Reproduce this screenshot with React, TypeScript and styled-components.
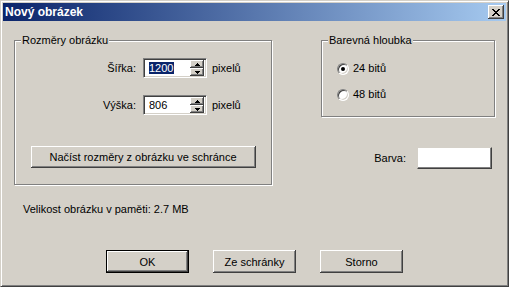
import styled, { createGlobalStyle, css } from 'styled-components';

const GlobalStyle = createGlobalStyle`
  html, body {
    margin: 0;
    padding: 0;
    background: #d4d0c8;
  }
  body {
    font-family: 'Liberation Sans', Arial, sans-serif;
    font-size: 11px;
    color: #000;
  }
`;

const raised = css`
  background: #d4d0c8;
  box-shadow: inset -1px -1px #404040, inset 1px 1px #fff, inset -2px -2px #808080,
    inset 2px 2px #d4d0c8;
`;

const Window = styled.div`
  box-sizing: border-box;
  width: 509px;
  height: 287px;
  display: flex;
  flex-direction: column;
  padding: 2px;
  background: #d4d0c8;
  border: 1px solid;
  border-color: #d4d0c8 #404040 #404040 #d4d0c8;
  box-shadow: inset 1px 1px #fff, inset -1px -1px #808080;
`;

const TitleBar = styled.div`
  height: 18px;
  display: flex;
  align-items: center;
  justify-content: space-between;
  padding: 0 2px;
  background: linear-gradient(to right, #0a246a, #a6caf0);
`;

const Title = styled.span`
  color: #fff;
  font-weight: bold;
  font-size: 12px;
  line-height: 14px;
`;

const CloseButton = styled.div`
  ${raised};
  width: 16px;
  height: 14px;
  display: flex;
  align-items: center;
  justify-content: center;
`;

const Client = styled.div`
  display: grid;
  grid-template-columns: 258px 174px;
  justify-content: space-between;
  padding: 19px 11px 0 11px;
`;

const Column = styled.div`
  display: flex;
  flex-direction: column;
`;

const GroupBox = styled.div<{ $height: number }>`
  box-sizing: border-box;
  height: ${({ $height }) => $height}px;
  display: flex;
  flex-direction: column;
  border: 1px solid #808080;
  box-shadow: inset 1px 1px #fff, 1px 1px #fff;
`;

const Caption = styled.div`
  align-self: flex-start;
  margin: -7px 0 0 6px;
  padding: 0 1px;
  line-height: 13px;
  background: #d4d0c8;
`;

const FieldRow = styled.div<{ $top: number }>`
  display: flex;
  align-items: center;
  margin-top: ${({ $top }) => $top}px;
  padding-left: 61px;
`;

const FieldLabel = styled.span`
  width: 60px;
  margin-right: 7px;
  text-align: right;
`;

const SpinBox = styled.div`
  box-sizing: border-box;
  width: 64px;
  height: 20px;
  display: flex;
  align-items: center;
  padding: 2px 2px 2px 5px;
  background: #fff;
  border: 1px solid;
  border-color: #808080 #fff #fff #808080;
  box-shadow: inset 1px 1px #404040, inset -1px -1px #d4d0c8;
`;

const SpinValue = styled.span<{ $selected?: boolean }>`
  flex: 1;
  line-height: 13px;
  span {
    padding: 0 1px 0 0;
    ${({ $selected }) =>
      $selected &&
      css`
        background: #0a246a;
        color: #fff;
      `}
  }
`;

const Spinner = styled.div`
  display: flex;
  flex-direction: column;
`;

const SpinButton = styled.div`
  ${raised};
  width: 14px;
  height: 8px;
  display: flex;
  align-items: center;
  justify-content: center;
`;

const Unit = styled.span`
  margin-left: 5px;
`;

const PushButton = styled.div<{ $default?: boolean; $width: number }>`
  ${raised};
  box-sizing: border-box;
  width: ${({ $width }) => $width}px;
  height: 23px;
  display: flex;
  align-items: center;
  justify-content: center;
  ${({ $default }) =>
    $default &&
    css`
      border: 1px solid #000;
    `}
`;

const WideButton = styled(PushButton)`
  height: 22px;
  align-self: center;
  margin-top: 31px;
`;

const InfoText = styled.div`
  margin: 18px 0 0 9px;
  line-height: 13px;
`;

const RadioRow = styled.label<{ $top: number }>`
  display: flex;
  align-items: center;
  margin: ${({ $top }) => $top}px 0 0 15px;
  line-height: 13px;
`;

const RadioDot = styled.span<{ $checked?: boolean }>`
  position: relative;
  box-sizing: border-box;
  width: 12px;
  height: 12px;
  margin-right: 4px;
  border-radius: 50%;
  background: #fff;
  border: 1px solid;
  border-color: #808080 #fff #fff #808080;
  box-shadow: inset 1px 1px #404040, inset -1px -1px #d4d0c8;
  &::after {
    content: '';
    display: ${({ $checked }) => ($checked ? 'block' : 'none')};
    position: absolute;
    left: 3px;
    top: 3px;
    width: 4px;
    height: 4px;
    border-radius: 50%;
    background: #000;
  }
`;

const ColorRow = styled.div`
  display: flex;
  align-items: center;
  justify-content: flex-end;
  margin-top: 30px;
  padding-right: 3px;
`;

const ColorLabel = styled.span`
  margin-right: 11px;
`;

const ColorSwatch = styled.div`
  box-sizing: border-box;
  width: 75px;
  height: 22px;
  background: #fff;
  border: 1px solid;
  border-color: #d4d0c8 #404040 #404040 #d4d0c8;
  box-shadow: inset -1px -1px #808080;
`;

const ButtonRow = styled.div`
  display: flex;
  justify-content: center;
  gap: 24px;
  margin-top: auto;
  padding-bottom: 11px;
`;

const Arrow = ({ up }: { up?: boolean }) => (
  <svg width="5" height="3" viewBox="0 0 5 3" shapeRendering="crispEdges">
    <path d={up ? 'M2 0h1v1h1v1h1v1H0V2h1V1h1z' : 'M0 0h5v1H4v1H3v1H2V2H1V1H0z'} fill="#000" />
  </svg>
);

const CloseGlyph = () => (
  <svg width="8" height="7" viewBox="0 0 8 7" shapeRendering="crispEdges">
    <path
      d="M0 0h2v1h1v1h2V1h1V0h2v1H7v1H6v1H5v1h1v1h1v1h1v1H6V6H5V5H3v1H2v1H0V6h1V5h1V4h1V3H2V2H1V1H0z"
      fill="#000"
    />
  </svg>
);

const Spin = ({ value, selected }: { value: string; selected?: boolean }) => (
  <SpinBox>
    <SpinValue $selected={selected}>
      <span>{value}</span>
    </SpinValue>
    <Spinner>
      <SpinButton>
        <Arrow up />
      </SpinButton>
      <SpinButton>
        <Arrow />
      </SpinButton>
    </Spinner>
  </SpinBox>
);

const App = () => {
  return (
    <>
      <GlobalStyle />
      <Window>
        <TitleBar>
          <Title>Nový obrázek</Title>
          <CloseButton>
            <CloseGlyph />
          </CloseButton>
        </TitleBar>
        <Client>
          <Column>
            <GroupBox $height={145}>
              <Caption>Rozměry obrázku</Caption>
              <FieldRow $top={11}>
                <FieldLabel>Šířka:</FieldLabel>
                <Spin value="1200" selected />
                <Unit>pixelů</Unit>
              </FieldRow>
              <FieldRow $top={17}>
                <FieldLabel>Výška:</FieldLabel>
                <Spin value="806" />
                <Unit>pixelů</Unit>
              </FieldRow>
              <WideButton $width={225}>Načíst rozměry z obrázku ve schránce</WideButton>
            </GroupBox>
            <InfoText>Velikost obrázku v paměti: 2.7 MB</InfoText>
          </Column>
          <Column>
            <GroupBox $height={77}>
              <Caption>Barevná hloubka</Caption>
              <RadioRow $top={15}>
                <RadioDot $checked />
                24 bitů
              </RadioRow>
              <RadioRow $top={13}>
                <RadioDot />
                48 bitů
              </RadioRow>
            </GroupBox>
            <ColorRow>
              <ColorLabel>Barva:</ColorLabel>
              <ColorSwatch />
            </ColorRow>
          </Column>
        </Client>
        <ButtonRow>
          <PushButton $default $width={83}>
            OK
          </PushButton>
          <PushButton $width={83}>Ze schránky</PushButton>
          <PushButton $width={83}>Storno</PushButton>
        </ButtonRow>
      </Window>
    </>
  );
};

export default App;
